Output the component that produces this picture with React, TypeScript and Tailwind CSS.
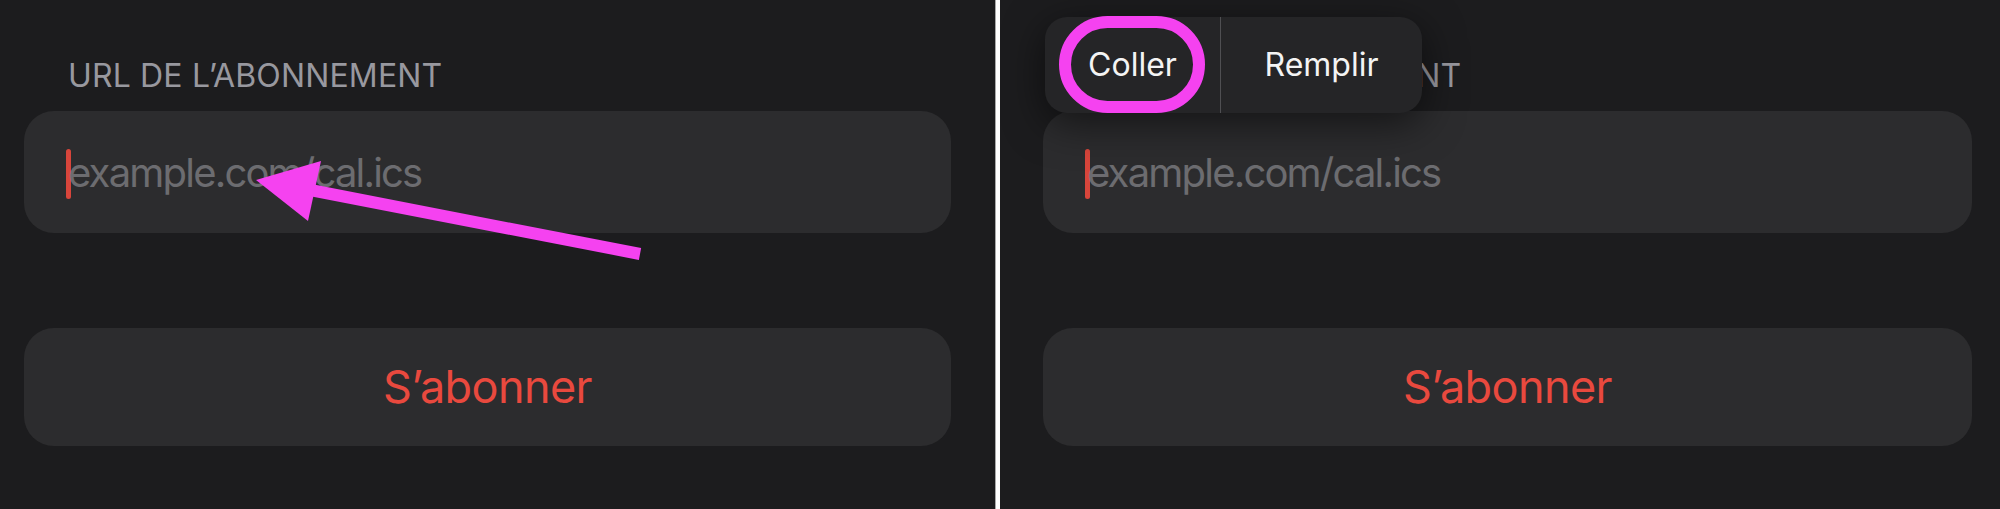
import React from "react";

const font = { fontFamily: "Inter, 'Noto Sans', 'Liberation Sans', sans-serif" };

function Field() {
  return (
    <div className="mt-[15px] h-[122px] rounded-[30px] bg-[#2c2c2e] pl-[42px] pt-[38px] flex items-start">
      <div className="h-[50px] w-[5px] rounded-full bg-[#d8453b]" />
      <span className="ml-[-3px] text-[40px] leading-[48px] tracking-[-1.8px] text-[#6c6c70]">
        example.com/cal.ics
      </span>
    </div>
  );
}

function Button() {
  return (
    <div className="mt-[95px] h-[118px] rounded-[30px] bg-[#2c2c2e] flex items-center justify-center">
      <span className="text-[45px] leading-[54px] tracking-[-0.6px] text-[#e9493e]">S’abonner</span>
    </div>
  );
}

function Label() {
  return (
    <div className="pt-[56px] pl-[44px] text-[32px] leading-[40px] tracking-[0.15px] text-[#98989f]">
      URL DE L’ABONNEMENT
    </div>
  );
}

export default function App() {
  return (
    <div className="flex w-[2000px] h-[509px] bg-[#1c1c1e] overflow-hidden" style={font}>
      <div className="relative w-[995px] h-full bg-[#1c1c1e] pl-[24px] pr-[44px]">
        <Label />
        <Field />
        <Button />
        <svg className="absolute inset-0 pointer-events-none" width="995" height="509" viewBox="0 0 995 509">
          <line x1="300" y1="188" x2="640" y2="254" stroke="#f542f0" strokeWidth="12" />
          <polygon points="256,180 321,161 308,221" fill="#f542f0" />
        </svg>
      </div>
      <div className="w-[1px] h-full bg-[#a8a8a8]" />
      <div className="w-[4px] h-full bg-white" />
      <div className="relative w-[1000px] h-full bg-[#1c1c1e] pl-[43px] pr-[28px]">
        <Label />
        <Field />
        <Button />
        <div className="absolute left-[45px] top-[17px] h-[96px] flex rounded-[22px] bg-[#252527] shadow-[0_10px_40px_rgba(0,0,0,0.55)]">
          <div className="relative w-[175px] flex items-center justify-center">
            <span className="text-[32px] leading-[40px] text-[#f4f4f4]">Coller</span>
            <div className="absolute left-[14px] top-[-1px] w-[146px] h-[97px] rounded-full border-[12px] border-[#f542f0]" />
          </div>
          <div className="w-[1px] h-full bg-[#4f4f52]" />
          <div className="w-[201px] flex items-center justify-center">
            <span className="text-[32px] leading-[40px] text-[#f4f4f4]">Remplir</span>
          </div>
        </div>
      </div>
    </div>
  );
}
